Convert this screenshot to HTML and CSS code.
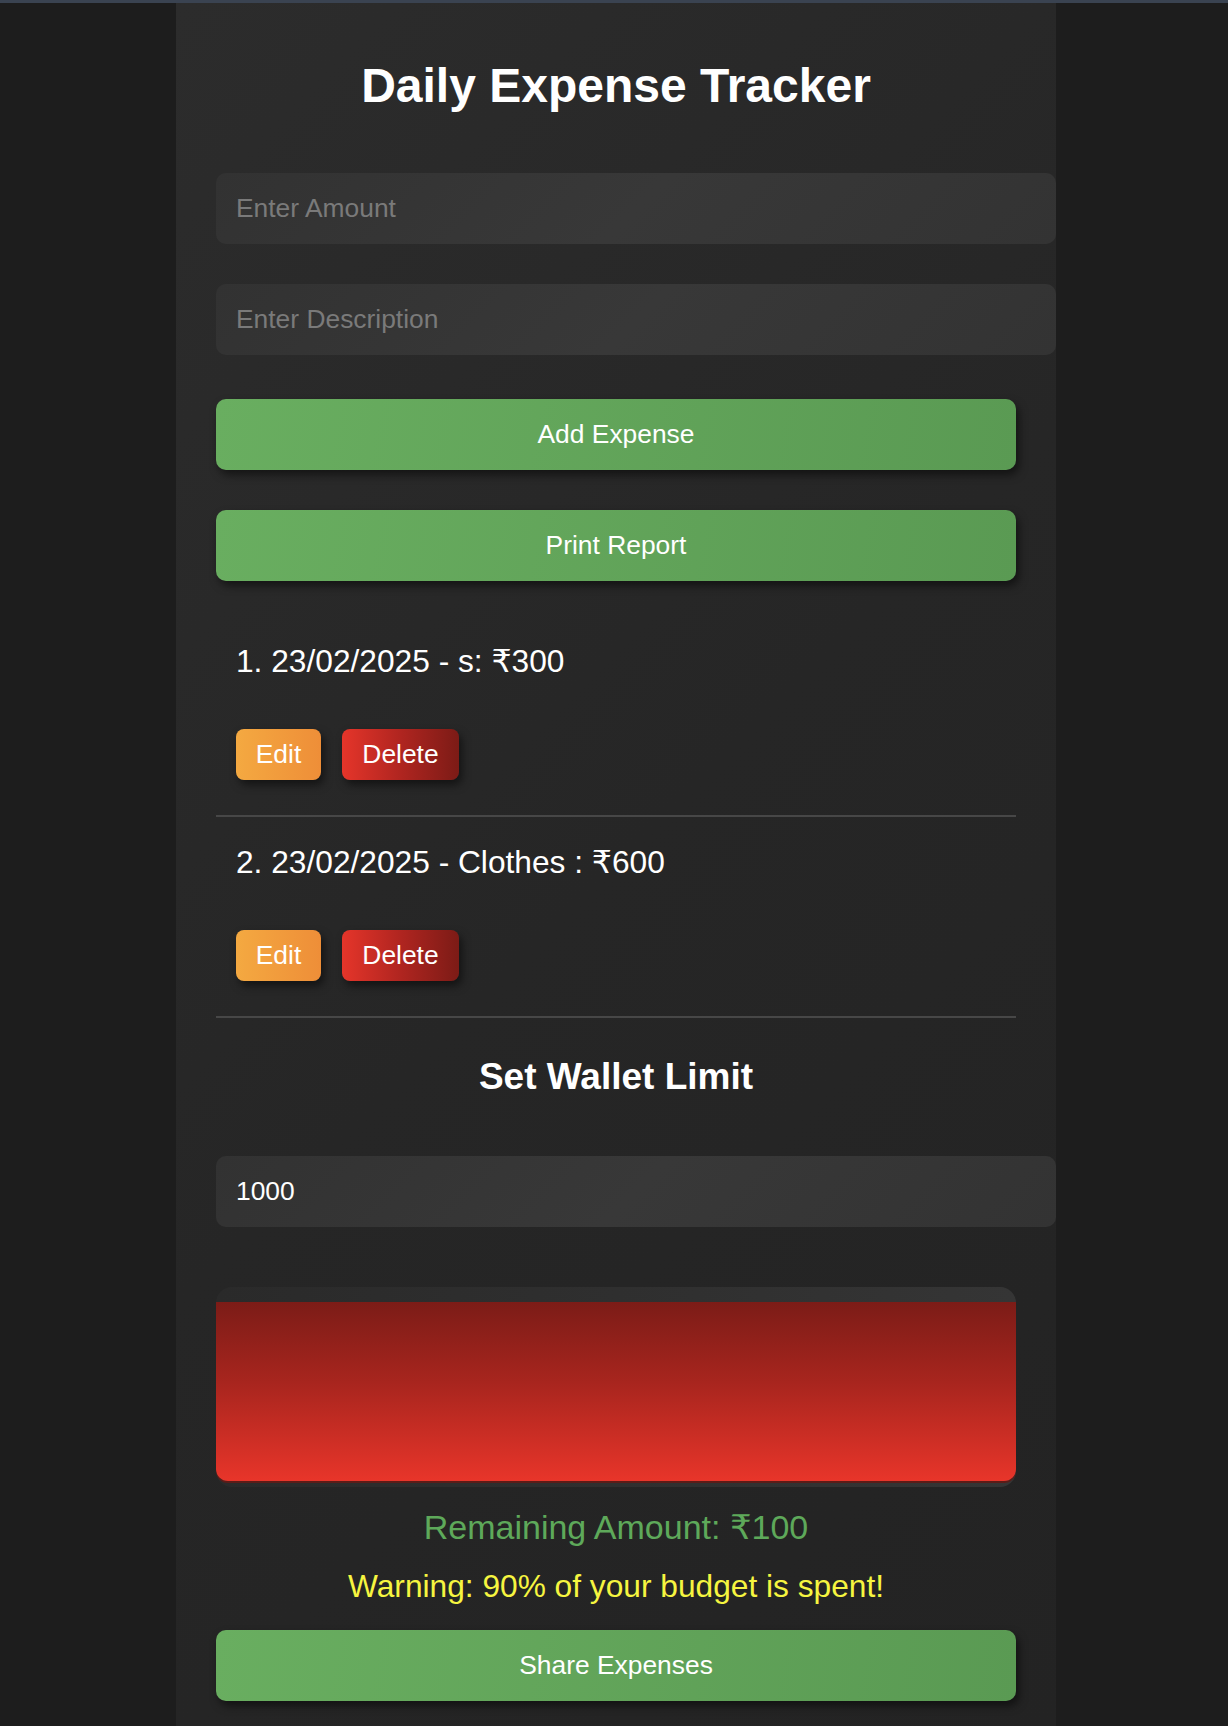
FILE: index.html
```html
<!DOCTYPE html>
<html lang="en">
<head>
<meta charset="utf-8">
<title>Daily Expense Tracker</title>
<link rel="stylesheet" href="styles.css">
</head>
<body>
<div class="topbar"></div>
<div class="page">
  <main class="container">
    <h1 class="title">Daily Expense Tracker</h1>
    <input class="field field-amount" type="number" placeholder="Enter Amount">
    <input class="field field-desc" type="text" placeholder="Enter Description">
    <button class="btn-green btn-add">Add Expense</button>
    <button class="btn-green btn-print">Print Report</button>
    <ul class="list">
      <li class="item">
        <div class="item-text">1. 23/02/2025 - s: ₹300</div>
        <div class="item-actions">
          <button class="btn-edit">Edit</button>
          <button class="btn-delete">Delete</button>
        </div>
      </li>
      <li class="item">
        <div class="item-text">2. 23/02/2025 - Clothes : ₹600</div>
        <div class="item-actions">
          <button class="btn-edit">Edit</button>
          <button class="btn-delete">Delete</button>
        </div>
      </li>
    </ul>
    <h2 class="subtitle">Set Wallet Limit</h2>
    <input class="field field-limit" type="number" value="1000">
    <div class="progress">
      <div class="progress-fill"></div>
    </div>
    <p class="remaining">Remaining Amount: ₹100</p>
    <p class="warning">Warning: 90% of your budget is spent!</p>
    <button class="btn-green btn-share">Share Expenses</button>
  </main>
</div>
</body>
</html>
```
FILE: styles.css
```css
* { box-sizing: border-box; }
html, body { margin: 0; padding: 0; }
body {
  background: #1d1d1d;
  font-family: "Liberation Sans", Arial, "DejaVu Sans", sans-serif;
  color: #fff;
  min-height: 1726px;
  overflow: hidden;
}
.topbar {
  height: 3px;
  background: #3a4351;
}
.page {
  padding-left: 176px;
}
.container {
  width: 880px;
  min-height: 1723px;
  padding: 55px 40px 0;
  background: linear-gradient(135deg, #2c2c2c 0%, #262626 50%, #232323 100%);
  display: flex;
  flex-direction: column;
  align-items: flex-start;
}
.title {
  margin: 0;
  width: 800px;
  text-align: center;
  font-size: 48px;
  font-weight: bold;
  line-height: 56px;
}
.field {
  box-sizing: content-box;
  width: 800px;
  height: 71px;
  padding: 0 20px;
  border: none;
  border-radius: 10px;
  background: linear-gradient(135deg, #323232 0%, #383838 50%, #333333 100%);
  color: #fff;
  font-family: "Liberation Sans", Arial, sans-serif;
  font-size: 26.4px;
  outline: none;
}
.field::placeholder { color: #7a7a7a; }
.field::-webkit-outer-spin-button,
.field::-webkit-inner-spin-button { -webkit-appearance: none; margin: 0; }
.field-amount { margin-top: 59px; }
.field-desc { margin-top: 40px; }
.btn-green {
  width: 800px;
  height: 71px;
  border: none;
  border-radius: 10px;
  background: linear-gradient(100deg, #69ae60 0%, #5a9a53 100%);
  color: #fff;
  font-family: "Liberation Sans", Arial, sans-serif;
  font-size: 26.4px;
  box-shadow: 3px 5px 9px rgba(0, 0, 0, 0.5);
  padding: 0;
}
.btn-add { margin-top: 44px; }
.btn-print { margin-top: 40px; }
.list {
  list-style: none;
  margin: 35px 0 0;
  padding: 0;
  width: 800px;
}
.item {
  padding: 27px 20px 35px;
  border-bottom: 2px solid #474747;
}
.item-text {
  font-size: 31.7px;
  line-height: 36px;
}
.item-actions {
  margin-top: 50px;
  display: flex;
  gap: 21px;
}
.btn-edit, .btn-delete {
  height: 51px;
  border: none;
  border-radius: 8px;
  color: #fff;
  font-family: "Liberation Sans", Arial, sans-serif;
  font-size: 26.4px;
  padding: 0 19px;
  box-shadow: 3px 5px 9px rgba(0, 0, 0, 0.5);
}
.btn-edit {
  width: 85px;
  background: linear-gradient(90deg, #f4a941 0%, #ee8e38 100%);
}
.btn-delete {
  width: 117px;
  background: linear-gradient(90deg, #e5352a 0%, #b02520 50%, #7c1b16 100%);
}
.subtitle {
  margin: 37px 0 0;
  width: 800px;
  text-align: center;
  font-size: 37px;
  font-weight: bold;
  line-height: 43px;
}
.field-limit { margin-top: 58px; }
.progress {
  margin-top: 60px;
  width: 800px;
  height: 200px;
  padding: 15px 0 6px;
  border-radius: 16px;
  overflow: hidden;
  background: linear-gradient(90deg, #2a2a2a 0%, #303030 60%, #353535 100%);
}
.progress-fill {
  height: 179px;
  width: 100%;
  border-radius: 0 0 12px 12px;
  background: linear-gradient(180deg, #7c1c17 0%, #a8251e 45%, #e8352a 100%);
  box-shadow: 0 2px 0 #5a1c18;
}
.remaining {
  margin: 20px 0 0;
  width: 800px;
  text-align: center;
  font-size: 34px;
  line-height: 40px;
  color: #5ea95a;
}
.warning {
  margin: 21px 0 0;
  width: 800px;
  text-align: center;
  font-size: 31.7px;
  line-height: 36px;
  color: #f6f540;
}
.btn-share { margin-top: 26px; }
```
